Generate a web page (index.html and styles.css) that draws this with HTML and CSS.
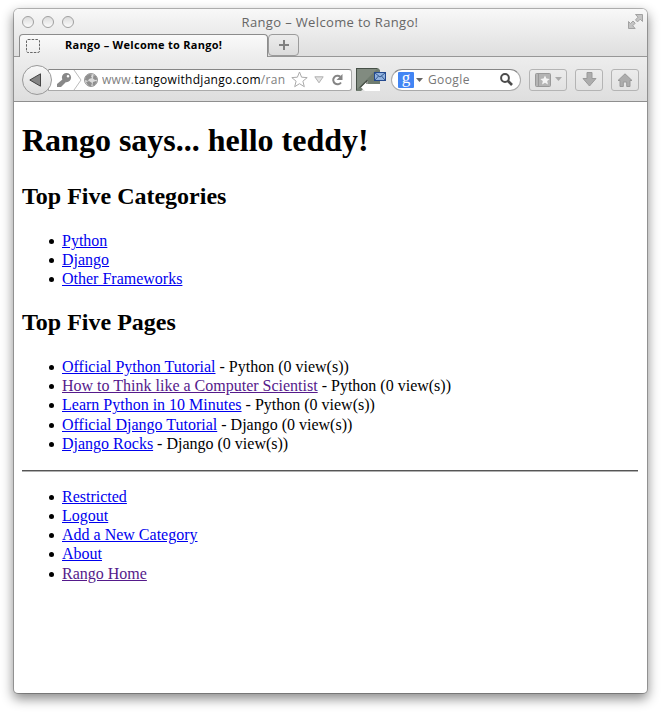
FILE: index.html
```html
<!DOCTYPE html>
<html lang="en">
<head>
<meta charset="utf-8">
<title>Rango - Welcome to Rango!</title>
<link rel="stylesheet" href="styles.css">
</head>
<body>
<div class="window">
  <header class="chrome">
    <div class="titlebar">
      <div class="lights"><i></i><i></i><i></i></div>
      <div class="title">Rango – Welcome to Rango!</div>
      <svg class="expand" width="15" height="15" viewBox="0 0 15 15"><g fill="#c4c4c4" stroke="#a2a2a2" stroke-width="1"><path d="M7.500 .5h7v7l-2.300-2.300-2.700 2.700-2-2 2.500-2.700z"/><path d="M.5 7.500l2 2 2.500-2.500 2.200 2.200-2.500 2.600 2.500 2.700H.5z"/></g></svg>
    </div>
    <div class="tabs">
      <div class="tab">
        <svg width="14" height="14" viewBox="0 0 14 14"><rect x=".5" y=".5" width="13" height="13" rx="1.500" fill="none" stroke="#666" stroke-dasharray="2.500 1.200"/></svg>
        <span class="tab-label">Rango – Welcome to Rango!</span>
      </div>
      <div class="newtab"><svg width="10" height="10" viewBox="0 0 10 10"><path d="M5 0v10M0 5h10" stroke="#808080" stroke-width="2"/></svg></div>
    </div>
    <div class="toolbar">
      <div class="back"><svg width="13" height="14" viewBox="0 0 13 14"><path d="M.8 7L11.500 .8v12.400z" fill="#858585" stroke="#444"/></svg></div>
      <div class="urlbar">
        <svg class="key" width="30" height="20" viewBox="0 0 30 20"><path d="M22 0l7 10-7 10" fill="none" stroke="#bbb"/><g fill="#888"><path d="M11 9l3 3-5 5H5v-3z"/><path fill-rule="evenodd" d="M14.500 3a4.600 4.600 0 1 0 0 9.200 4.600 4.600 0 0 0 0-9.200zm1.500 2a1.300 1.300 0 1 1 0 2.600 1.300 1.300 0 0 1 0-2.600z"/></g></svg>
        <svg class="globe" width="14" height="14" viewBox="0 0 14 14"><circle cx="7" cy="7" r="6.500" fill="#dcdcdc" stroke="#999"/><path d="M1.500 3.500L5 1l3 .5-1 2 1 1.500-3 1-1 2-3-1zM9.500 2l2.500 1 1.500 3.500-2.500.5L9 5.500zM2 9l3-1 3 2-1 3.500-3-1zM9 9l3-1 1 1-3 4-1.500-1z" fill="#8f8f8f"/></svg>
        <span class="url">www.<b>tangowithdjango.com</b>/ran</span>
        <svg class="star" width="17" height="17" viewBox="0 0 17 17"><path d="M8.500 1l2.100 5.200 5.600.4-4.300 3.600 1.400 5.500-4.800-3-4.800 3 1.400-5.500L.8 6.600l5.600-.4z" fill="#fff" stroke="#aaa"/></svg>
        <svg class="drop" width="10" height="8" viewBox="0 0 10 8"><path d="M.8 .8h8.400L5 6.800z" fill="#e3e3e3" stroke="#b0b0b0"/></svg>
        <svg class="reload" width="12" height="12" viewBox="0 0 12 12"><path d="M9.300 2.700A4.300 4.300 0 1 0 10 8.500" fill="none" stroke="#858585" stroke-width="2"/><path d="M11.500 0v6h-6z" fill="#858585"/></svg>
      </div>
      <svg class="addon" width="30" height="23" viewBox="0 0 30 23"><path d="M0 0h22l2 2v14H12L5 23H0z" fill="#707c70"/><path d="M0 22V0h21" fill="none" stroke="#465047" stroke-width="2"/><path d="M1 1h20L1 21z" fill="#818b80"/><path d="M5 19.500l7-7V16h12v7H9z" fill="#fff"/><path d="M4 19.500l7-7V16" fill="none" stroke="#30362f"/><rect x="18.500" y="4.500" width="11" height="8" fill="#91b2df" stroke="#23498f"/><path d="M19 5l5 4 5-4M19 12l3.500-4M29 12l-3.500-4" fill="none" stroke="#34598f"/></svg>
      <div class="search">
        <span class="g-logo">g</span>
        <svg width="7" height="4" viewBox="0 0 7 4"><path d="M0 0h7L3.500 4z" fill="#666"/></svg>
        <span class="search-text">Google</span>
        <svg class="lens" width="13" height="13" viewBox="0 0 13 13"><circle cx="5" cy="5" r="3.900" fill="none" stroke="#4c4c4c" stroke-width="2"/><path d="M8 8l4 4" stroke="#4c4c4c" stroke-width="2.600"/></svg>
      </div>
      <div class="button wide">
        <svg width="16" height="14" viewBox="0 0 16 14"><rect x=".5" y=".5" width="15" height="13" rx="1" fill="#b4b4b4" stroke="#999"/><path d="M3.500 1v12" stroke="#999"/><path d="M10 2.500l1.400 3 3.300.4-2.500 2.200.7 3.300L10 9.700l-2.900 1.700.7-3.300-2.500-2.200 3.300-.4z" fill="#f5f5f5"/></svg>
        <svg class="wide-arrow" width="7" height="4" viewBox="0 0 7 4"><path d="M0 0h7L3.500 4z" fill="#aaa"/></svg>
      </div>
      <div class="button"><svg width="15" height="15" viewBox="0 0 15 15"><path d="M5 .5h5v6h4l-6.500 7.500L1 6.500h4z" fill="#adadad" stroke="#999"/></svg></div>
      <div class="button"><svg width="16" height="14" viewBox="0 0 16 14"><path d="M8 .8L15 7.500h-2v6H9.700V9H6.300v4.500H3v-6H1z" fill="#adadad" stroke="#999"/></svg></div>
    </div>
  </header>
  <main class="page">
    <h1>Rango says... hello teddy!</h1>
    <h2>Top Five Categories</h2>
    <ul>
      <li><a href="#python">Python</a></li>
      <li><a href="#django">Django</a></li>
      <li><a href="#other">Other Frameworks</a></li>
    </ul>
    <h2>Top Five Pages</h2>
    <ul>
      <li><a href="#p1">Official Python Tutorial</a> - Python (0 view(s))</li>
      <li><a class="visited" href="#p2">How to Think like a Computer Scientist</a> - Python (0 view(s))</li>
      <li><a href="#p3">Learn Python in 10 Minutes</a> - Python (0 view(s))</li>
      <li><a href="#p4">Official Django Tutorial</a> - Django (0 view(s))</li>
      <li><a href="#p5">Django Rocks</a> - Django (0 view(s))</li>
    </ul>
    <hr>
    <ul class="nav">
      <li><a href="#restricted">Restricted</a></li>
      <li><a href="#logout">Logout</a></li>
      <li><a href="#add">Add a New Category</a></li>
      <li><a href="#about">About</a></li>
      <li><a class="visited" href="#home">Rango Home</a></li>
    </ul>
  </main>
</div>
</body>
</html>
```
FILE: styles.css
```css
* { box-sizing: border-box; }
body { margin: 0; height: 713px; padding: 9px 14px 0; background: #fff; }
svg { display: block; flex: none; }
.window {
  width: 633px; height: 684px; border-radius: 5px 5px 4px 4px; background: #fff;
  box-shadow: 0 0 0 1px rgba(0,0,0,.25), 0 5px 12px 1px rgba(0,0,0,.45);
}
.chrome {
  height: 93px; display: flex; flex-direction: column; border-radius: 5px 5px 0 0;
  border-bottom: 1px solid #8f8f8f; overflow: hidden;
  background: linear-gradient(#f8f8f8, #dedede 48px, #ededed 48px, #dedede);
  font-family: "Open Sans", "Noto Sans", sans-serif;
}
.titlebar { height: 25px; flex: none; display: flex; align-items: center; padding: 0 4px 0 8px; }
.lights { display: flex; gap: 8px; width: 80px; }
.lights i { width: 12px; height: 12px; border: 1px solid #a0a0a0; border-radius: 50%; background: linear-gradient(#dcdcdc, #fbfbfb); }
.title { flex: 1; text-align: center; font-size: 13px; line-height: 24px; color: #666; letter-spacing: .35px; white-space: nowrap; }
.expand { margin-left: 70px; }
.tabs { height: 23px; flex: none; display: flex; padding-left: 5px; border-bottom: 1px solid #979797; }
.tab {
  width: 249px; height: 23px; display: flex; align-items: center; padding-left: 6px;
  border: 1px solid #8c8c8c; border-bottom: 0; border-radius: 4px 4px 0 0;
  background: linear-gradient(#fafafa, #ededed);
}
.tab-label { margin-left: 25px; font-size: 11px; line-height: 20px; margin-bottom: 2px; font-weight: 700; color: #000; letter-spacing: .28px; white-space: nowrap; }
.newtab {
  width: 31px; height: 22px; display: flex; align-items: center; justify-content: center;
  border: 1px solid #9b9b9b; border-radius: 4px; background: linear-gradient(#ececec, #dcdcdc);
}
.toolbar { flex: 1; display: flex; align-items: center; padding: 1px 8px 0; }
.back {
  position: relative; z-index: 1; width: 30px; height: 30px; flex: none; margin-right: -4px;
  border: 1px solid #999; border-radius: 50%; background: linear-gradient(#f8f8f8, #dcdcdc);
  display: flex; align-items: center; justify-content: center; padding-right: 3px;
}
.urlbar, .search { height: 22px; display: flex; align-items: center; background: #fff; border: 1px solid #aaa; border-top-color: #858585; }
.urlbar { width: 304px; flex: none; border-radius: 0 3px 3px 0; padding-left: 3px; }
.globe { margin-left: 2px; }
.url { width: 184px; margin-left: 4px; font-size: 12px; line-height: 20px; color: #808080; letter-spacing: .28px; white-space: nowrap; overflow: hidden; }
.url b { font-weight: 400; color: #000; }
.star { margin-left: 5px; }
.drop { margin-left: 6px; }
.reload { margin-left: 7px; }
.addon { margin-left: 4px; }
.search { width: 130px; flex: none; margin-left: 5px; border-radius: 11px; padding: 0 7px 0 6px; }
.g-logo { width: 16px; height: 16px; border-radius: 1px; background: #4285f4; color: #fff; font: 17px/12px "Liberation Serif", serif; text-align: center; margin-right: 2px; }
.search-text { margin-left: 5px; flex: 1; font-size: 12px; line-height: 20px; color: #777; letter-spacing: .4px; }
.button { width: 28px; height: 22px; flex: none; margin-left: 8px; display: flex; align-items: center; justify-content: center; border: 1px solid #b4b4b4; border-radius: 3px; background: linear-gradient(#ececec, #e2e2e2); }
.wide { width: 38px; gap: 4px; }
.wide-arrow { margin-bottom: 2px; }
.page { display: flow-root; padding: 0 9px 0 8px; font: 16px/19.2px "Liberation Serif", serif; color: #000; }
h1 { margin: 20px 0 0; font-size: 32px; line-height: 36px; }
h2 { margin: 24px 0 21px; font-size: 24px; line-height: 28px; }
ul { margin: 0; padding-left: 40px; list-style: none; }
li::before {
  content: ""; display: inline-block; width: 5px; height: 5px; margin: 0 8px 2px -13px;
  border-radius: 50%; background: #000;
}
ul + h2 { margin-top: 19.4px; }
a { color: #00e; text-decoration: underline; }
.visited { color: #551a8b; }
hr { height: 2px; margin: 16.800px 0 15px; border: 0; border-top: 1px solid #555; border-bottom: 1px solid #b0b0b0; }
```
